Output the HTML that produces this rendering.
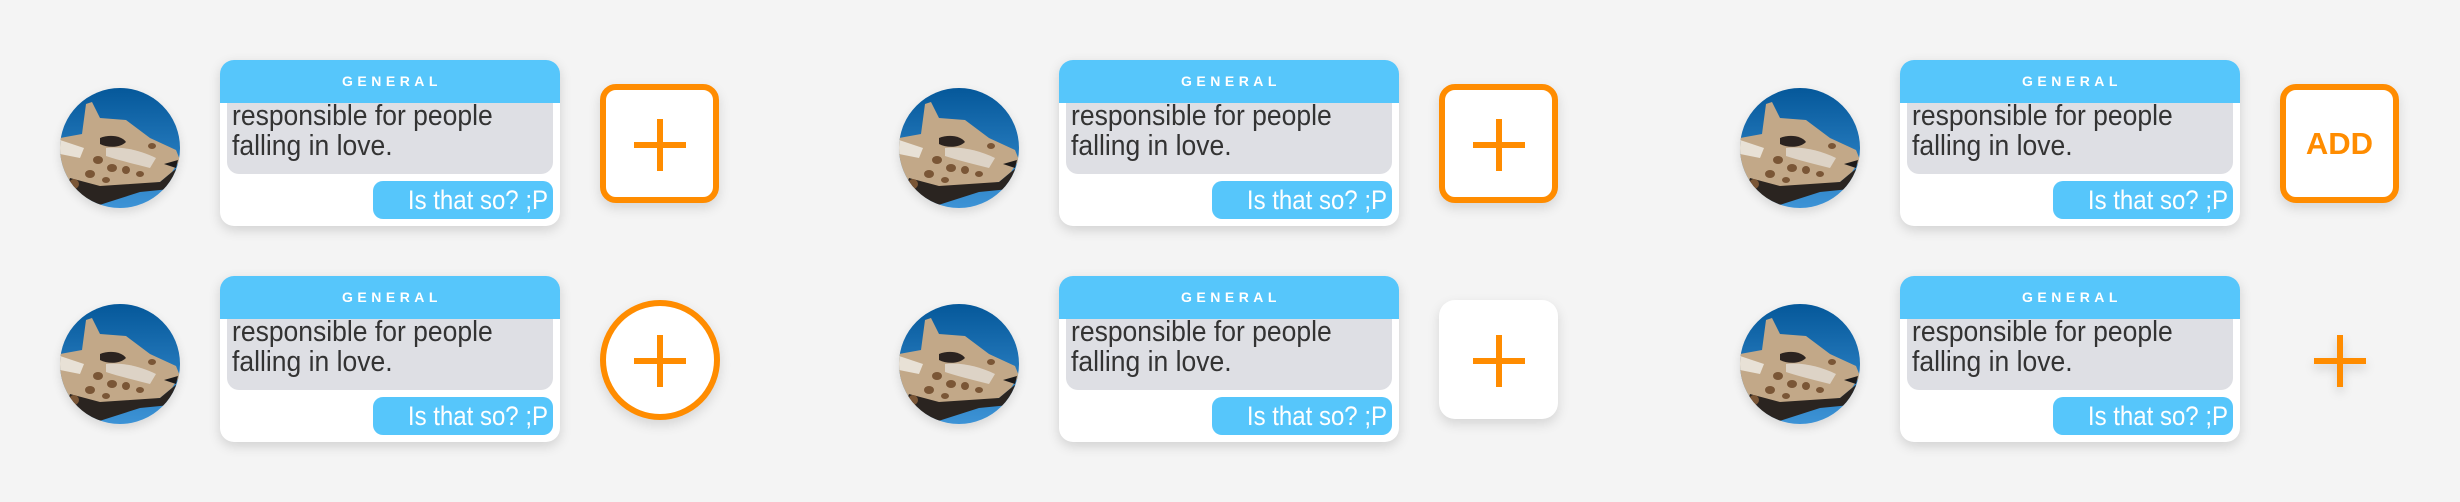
<!DOCTYPE html>
<html><head><meta charset="utf-8"><style>
*{margin:0;padding:0;box-sizing:border-box}
body{width:2460px;height:502px;background:#f4f4f4;position:relative;overflow:hidden;font-family:"Liberation Sans",sans-serif}
.g{position:absolute;left:0;top:0;width:760px;height:240px}
.av{position:absolute;left:60px;top:88px;width:120px;height:120px;border-radius:50%;overflow:hidden;box-shadow:0 4px 10px rgba(0,0,0,.12)}
.card{position:absolute;left:220px;top:60px;width:340px;height:166px;background:#fff;border-radius:14px;overflow:hidden;box-shadow:0 4px 12px rgba(0,0,0,.15)}
.hd{position:absolute;left:0;top:0;width:340px;height:43px;background:#56c6fb;color:#fff;font-weight:bold;font-size:14px;letter-spacing:4.5px;text-align:center;line-height:43px;padding-left:4px;z-index:2}
.gray{position:absolute;left:7px;top:30px;width:326px;height:84px;background:#dedfe4;border-radius:12px}
.gt{position:absolute;left:12px;top:40px;font-size:26.5px;line-height:28px;color:#333;z-index:1;transform:scaleY(1.08);transform-origin:0 0}
.blue{position:absolute;left:153px;top:121px;width:180px;height:38px;background:#56c6fb;border-radius:10px;color:#fff;font-size:24px;line-height:40px;text-align:right;padding-right:5px}
.blue span{display:inline-block;transform:scaleY(1.12)}
.btn{position:absolute;left:600px;top:84px;width:119px;height:119px;background:#fff;box-shadow:0 5px 12px rgba(0,0,0,.13)}
.sq{border:6px solid #ff8c00;border-radius:16px}
.ci{border:6px solid #ff8c00;border-radius:50%;width:120px;height:120px}
.pl{position:absolute;left:34px;top:35px;width:52px;height:52px}
.sq .pl,.ci .pl{left:28px;top:29px}
.pl:before{content:"";position:absolute;left:0;top:23px;width:52px;height:6px;background:#ff8c00}
.pl:after{content:"";position:absolute;left:23px;top:0;width:6px;height:52px;background:#ff8c00}
.add{position:absolute;left:0;top:0;width:107px;height:107px;line-height:107px;text-align:center;color:#ff8c00;font-weight:bold;font-size:31px}
.bare{background:transparent;box-shadow:none}
.bare .pl{filter:drop-shadow(0 5px 5px rgba(0,0,0,.15))}
</style></head><body>
<svg width="0" height="0" style="position:absolute"><defs>
<linearGradient id="sky" x1="0" y1="0" x2="0" y2="1"><stop offset="0" stop-color="#05589a"/><stop offset="1" stop-color="#3d93d6"/></linearGradient>
<symbol id="gir" viewBox="0 0 120 120">
<rect width="120" height="120" fill="url(#sky)"/>
<path d="M0 50 L22 46 L26 16 L32 14 L40 30 L66 32 L90 50 L116 62 L120 72 L112 84 L100 94 L70 98 L40 104 L24 112 L0 112 Z" fill="#c2a888"/>
<path d="M0 52 L24 60 L20 70 L0 66 Z" fill="#e8e1d6"/>
<path d="M40 50 C50 46 62 48 66 54 C60 60 48 60 40 56 Z" fill="#2b2320"/>
<path d="M46 60 C60 58 80 62 96 70 L90 80 C74 76 58 72 46 68 Z" fill="#ddd3c6"/>
<path d="M10 90 L40 98 L70 96 L100 94 L112 84 L120 78 L120 100 L80 104 L30 120 L0 120 Z" fill="#2a2420"/>
<g fill="#7a5636"><ellipse cx="38" cy="72" rx="5" ry="4"/><ellipse cx="52" cy="80" rx="5" ry="4"/><ellipse cx="66" cy="82" rx="4" ry="4"/><ellipse cx="30" cy="86" rx="5" ry="4"/><ellipse cx="46" cy="92" rx="4" ry="3"/><ellipse cx="80" cy="86" rx="4" ry="3"/><ellipse cx="92" cy="58" rx="4" ry="3"/><ellipse cx="14" cy="96" rx="5" ry="5"/></g>
<path d="M104 76 L118 72 L116 80 Z" fill="#1c1a1a"/>
</symbol></defs></svg>

<div class="g" style="left:0;top:0">
<div class="av"><svg width="120" height="120"><use href="#gir"/></svg></div>
<div class="card"><div class="hd">GENERAL</div><div class="gray"></div><div class="gt">responsible for people<br>falling in love.</div><div class="blue"><span>Is that so? ;P</span></div></div>
<div class="btn sq"><div class="pl"></div></div></div>

<div class="g" style="left:839px;top:0">
<div class="av"><svg width="120" height="120"><use href="#gir"/></svg></div>
<div class="card"><div class="hd">GENERAL</div><div class="gray"></div><div class="gt">responsible for people<br>falling in love.</div><div class="blue"><span>Is that so? ;P</span></div></div>
<div class="btn sq"><div class="pl"></div></div></div>

<div class="g" style="left:1680px;top:0">
<div class="av"><svg width="120" height="120"><use href="#gir"/></svg></div>
<div class="card"><div class="hd">GENERAL</div><div class="gray"></div><div class="gt">responsible for people<br>falling in love.</div><div class="blue"><span>Is that so? ;P</span></div></div>
<div class="btn sq"><span class="add">ADD</span></div></div>

<div class="g" style="left:0;top:216px">
<div class="av"><svg width="120" height="120"><use href="#gir"/></svg></div>
<div class="card"><div class="hd">GENERAL</div><div class="gray"></div><div class="gt">responsible for people<br>falling in love.</div><div class="blue"><span>Is that so? ;P</span></div></div>
<div class="btn ci"><div class="pl"></div></div></div>

<div class="g" style="left:839px;top:216px">
<div class="av"><svg width="120" height="120"><use href="#gir"/></svg></div>
<div class="card"><div class="hd">GENERAL</div><div class="gray"></div><div class="gt">responsible for people<br>falling in love.</div><div class="blue"><span>Is that so? ;P</span></div></div>
<div class="btn" style="border-radius:16px"><div class="pl"></div></div></div>

<div class="g" style="left:1680px;top:216px">
<div class="av"><svg width="120" height="120"><use href="#gir"/></svg></div>
<div class="card"><div class="hd">GENERAL</div><div class="gray"></div><div class="gt">responsible for people<br>falling in love.</div><div class="blue"><span>Is that so? ;P</span></div></div>
<div class="btn bare"><div class="pl"></div></div></div>
</body></html>
